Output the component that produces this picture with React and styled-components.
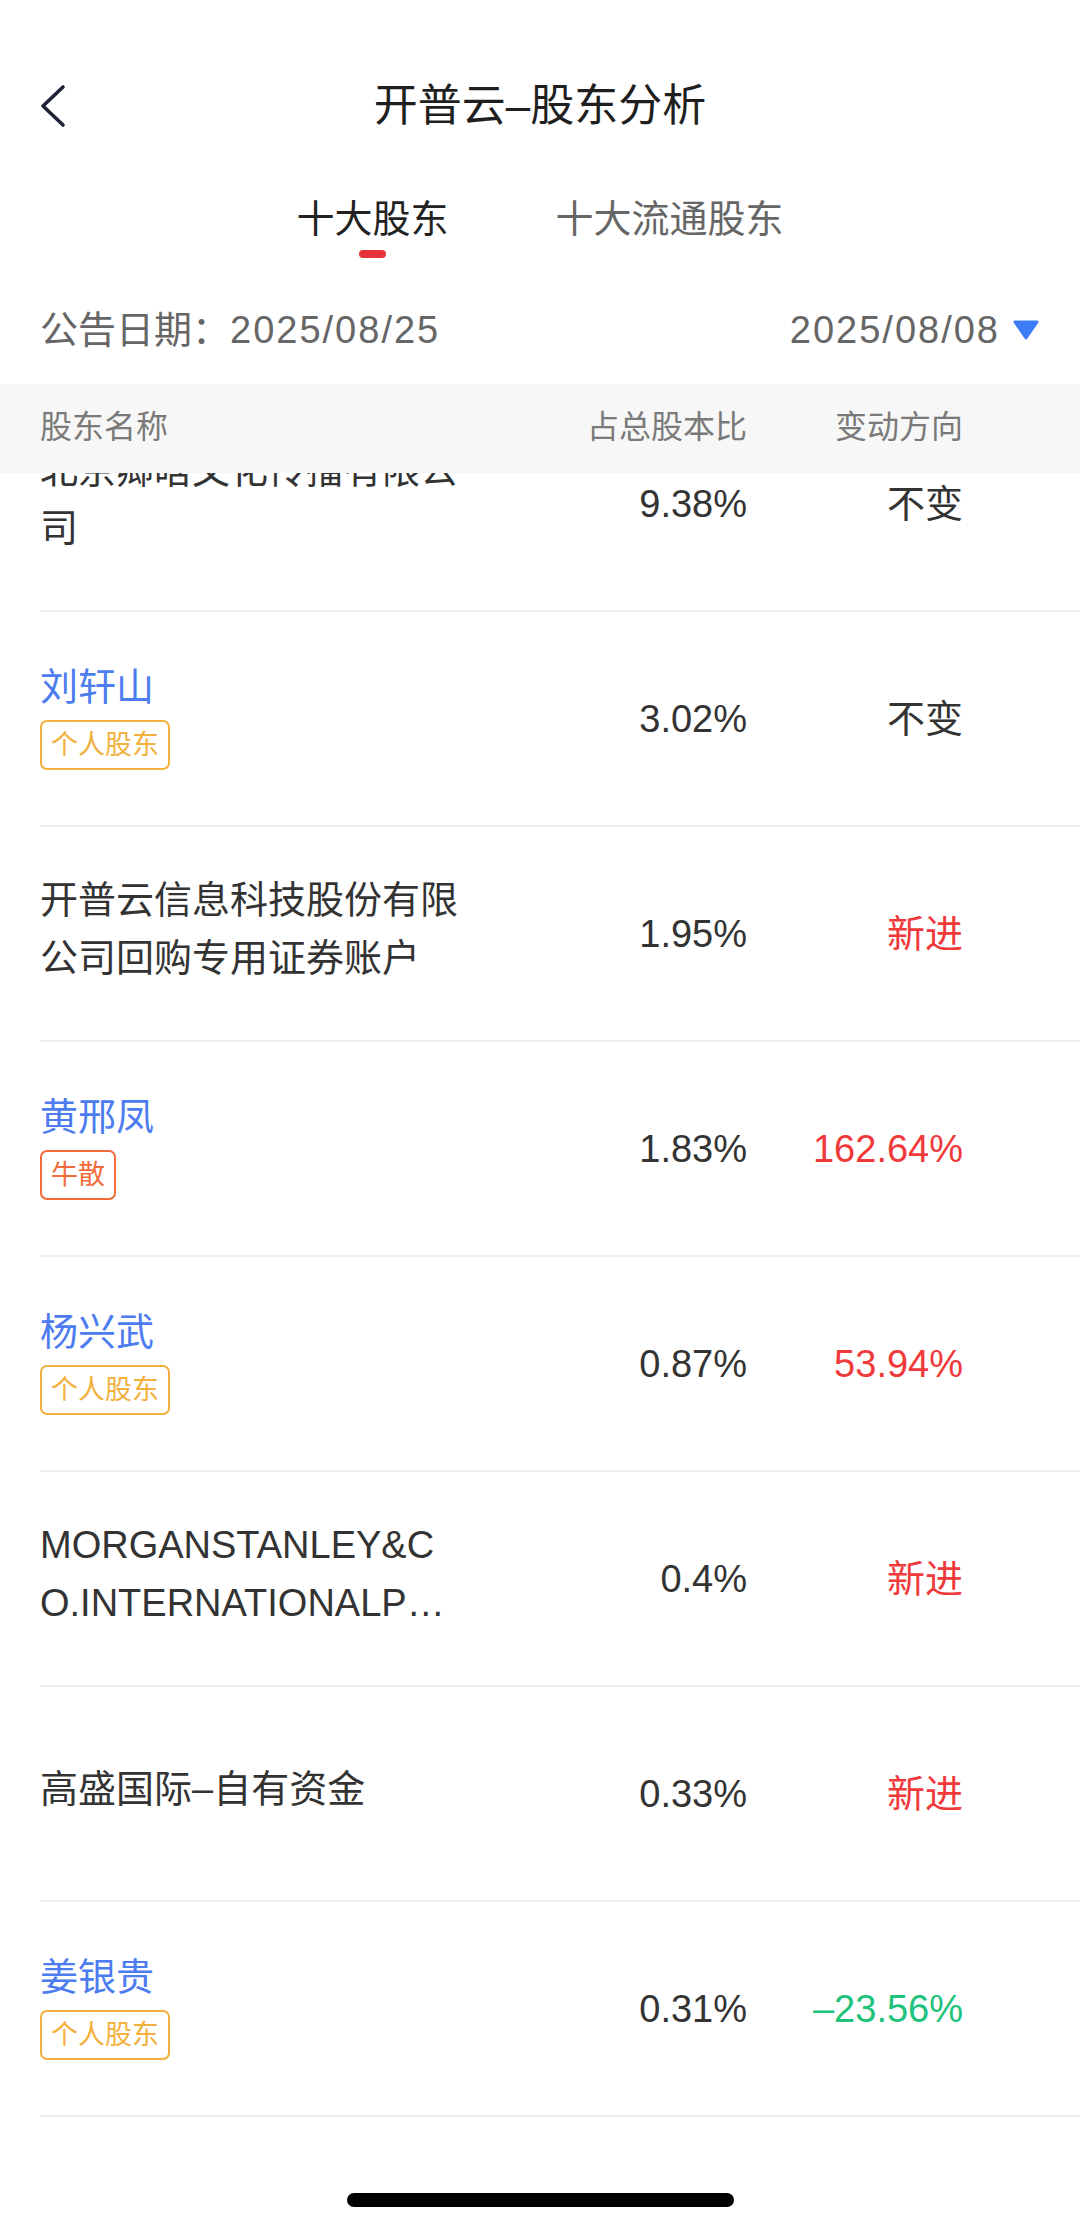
import React, { useLayoutEffect, useRef } from "react";
import styled, { createGlobalStyle } from "styled-components";

const GlobalStyle = createGlobalStyle`
  html, body { margin: 0; padding: 0; background: #ffffff; }
  body { font-family: "Liberation Sans", "Noto Sans CJK SC", sans-serif; }
  * { box-sizing: border-box; }
`;

const COLS = "422px 285px 216px 1fr";

const Page = styled.div`
  position: relative;
  width: 1080px;
  height: 2228px;
  display: flex;
  flex-direction: column;
  overflow: hidden;
  background: #ffffff;
`;

const NavBar = styled.header`
  flex: none;
  height: 162px;
  padding-top: 50px;
  display: grid;
  grid-template-columns: 1fr auto 1fr;
  align-items: center;
`;

const BackButton = styled.button`
  justify-self: start;
  margin-left: 38px;
  width: 30px;
  height: 44px;
  padding: 0;
  border: 0;
  background: none;
  display: flex;
  align-items: center;
  color: #1d2535;
`;

const Title = styled.h1`
  margin: 0;
  font-size: 44px;
  line-height: 56px;
  font-weight: 400;
  color: #1f1f1f;
`;

const TabBar = styled.nav`
  flex: none;
  height: 96px;
  display: flex;
  justify-content: center;
  gap: 107px;
`;

const Tab = styled.div`
  padding-top: 31px;
  display: flex;
  flex-direction: column;
  align-items: center;
  font-size: 38px;
  line-height: 52px;
  color: ${(p) => (p.$active ? "#222222" : "#666666")};
`;

const TabIndicator = styled.span`
  margin-top: 5px;
  width: 27px;
  height: 8px;
  border-radius: 4px;
  background: ${(p) => (p.$active ? "#e8333a" : "transparent")};
`;

const DateRow = styled.div`
  flex: none;
  height: 126px;
  padding: 46px 40px 28px 40px;
  display: flex;
  justify-content: space-between;
  align-items: center;
  font-size: 38px;
  line-height: 52px;
  color: #666666;
`;

const DateNum = styled.span`
  letter-spacing: 2px;
`;

const DatePicker = styled.div`
  display: flex;
  align-items: center;
  gap: 12px;
`;

const TableHead = styled.div`
  flex: none;
  height: 89px;
  padding: 0 0 10px 40px;
  background: #f7f7f7;
  display: grid;
  grid-template-columns: ${COLS};
  align-items: center;
  font-size: 32px;
  color: #7a7a7a;
`;

const HeadCell = styled.div`
  text-align: ${(p) => (p.$right ? "right" : "left")};
`;

const Body = styled.div`
  flex: 1;
  overflow-y: auto;
  scrollbar-width: none;
  &::-webkit-scrollbar {
    display: none;
  }
`;

const List = styled.div`
  padding-bottom: 150px;
`;

const Row = styled.div`
  height: 215px;
  margin-left: 40px;
  border-bottom: 2px solid #eeeeee;
  display: grid;
  grid-template-columns: ${COLS};
  align-items: center;
`;

const NameCell = styled.div`
  padding-bottom: 10px;
  display: flex;
  flex-direction: column;
  align-items: flex-start;
`;

const Name = styled.div`
  font-size: 38px;
  line-height: 58px;
  color: ${(p) => (p.$person ? "#4c7cf0" : "#333333")};
  word-break: break-all;
  display: -webkit-box;
  -webkit-box-orient: vertical;
  -webkit-line-clamp: 2;
  overflow: hidden;
`;

const BADGE = {
  personal: "#f2b03c",
  star: "#f26b3a",
};

const Badge = styled.span`
  margin-top: 4px;
  height: 50px;
  padding: 0 9px;
  border: 2px solid ${(p) => BADGE[p.$tone]};
  border-radius: 7px;
  font-size: 27px;
  line-height: 46px;
  color: ${(p) => BADGE[p.$tone]};
`;

const TONE = {
  flat: "#333333",
  up: "#f0393a",
  down: "#21c27b",
};

const Value = styled.div`
  font-size: 38px;
  line-height: 58px;
  text-align: right;
  color: ${(p) => TONE[p.$tone || "flat"]};
`;

const HomeIndicator = styled.div`
  position: absolute;
  left: 50%;
  bottom: 21px;
  width: 387px;
  height: 14px;
  margin-left: -193px;
  border-radius: 7px;
  background: #000000;
`;

const rows = [
  { name: "北京卿晗文化传播有限公司", pct: "9.38%", change: "不变", tone: "flat" },
  { name: "刘轩山", person: true, badge: "个人股东", badgeTone: "personal", pct: "3.02%", change: "不变", tone: "flat" },
  { name: "开普云信息科技股份有限公司回购专用证券账户", pct: "1.95%", change: "新进", tone: "up" },
  { name: "黄邢凤", person: true, badge: "牛散", badgeTone: "star", pct: "1.83%", change: "162.64%", tone: "up" },
  { name: "杨兴武", person: true, badge: "个人股东", badgeTone: "personal", pct: "0.87%", change: "53.94%", tone: "up" },
  { name: "MORGANSTANLEY&CO.INTERNATIONALPLC.", pct: "0.4%", change: "新进", tone: "up" },
  { name: "高盛国际–自有资金", pct: "0.33%", change: "新进", tone: "up" },
  { name: "姜银贵", person: true, badge: "个人股东", badgeTone: "personal", pct: "0.31%", change: "–23.56%", tone: "down" },
];

function ChevronLeft() {
  return (
    <svg width="30" height="44" viewBox="0 0 30 44" fill="none">
      <polyline
        points="25,3 5,22 25,41"
        stroke="currentColor"
        strokeWidth="3.6"
        strokeLinecap="round"
        strokeLinejoin="round"
      />
    </svg>
  );
}

function Caret() {
  return (
    <svg width="28" height="20" viewBox="0 0 28 20">
      <path d="M3 2 H25 L14 18 Z" fill="#3d7cf7" stroke="#3d7cf7" strokeWidth="3" strokeLinejoin="round" />
    </svg>
  );
}

export default function App() {
  const bodyRef = useRef(null);
  useLayoutEffect(() => {
    if (bodyRef.current) bodyRef.current.scrollTop = 76;
  }, []);

  return (
    <Page>
      <GlobalStyle />
      <NavBar>
        <BackButton aria-label="返回">
          <ChevronLeft />
        </BackButton>
        <Title>开普云–股东分析</Title>
        <span />
      </NavBar>

      <TabBar>
        <Tab $active>
          十大股东
          <TabIndicator $active />
        </Tab>
        <Tab>
          十大流通股东
          <TabIndicator />
        </Tab>
      </TabBar>

      <DateRow>
        <span>
          公告日期：<DateNum>2025/08/25</DateNum>
        </span>
        <DatePicker>
          <DateNum>2025/08/08</DateNum>
          <Caret />
        </DatePicker>
      </DateRow>

      <TableHead>
        <HeadCell>股东名称</HeadCell>
        <HeadCell $right>占总股本比</HeadCell>
        <HeadCell $right>变动方向</HeadCell>
      </TableHead>

      <Body ref={bodyRef}>
        <List>
          {rows.map((r) => (
            <Row key={r.name}>
              <NameCell>
                <Name $person={r.person}>{r.name}</Name>
                {r.badge && <Badge $tone={r.badgeTone}>{r.badge}</Badge>}
              </NameCell>
              <Value>{r.pct}</Value>
              <Value $tone={r.tone}>{r.change}</Value>
            </Row>
          ))}
        </List>
      </Body>

      <HomeIndicator />
    </Page>
  );
}
